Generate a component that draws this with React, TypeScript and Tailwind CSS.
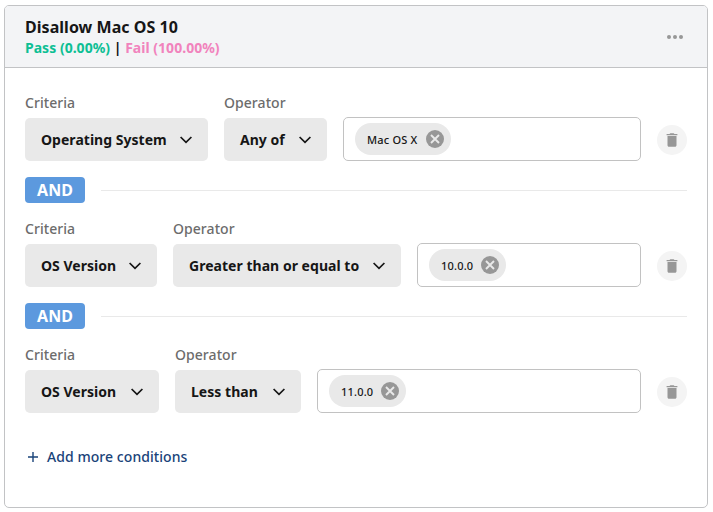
import React from "react";

type Condition = {
  criteria: string;
  operator: string;
  value: string;
  criteriaWidth: string;
  operatorWidth: string;
  chipWidth: string;
};

const conditions: Condition[] = [
  { criteria: "Operating System", operator: "Any of", value: "Mac OS X", criteriaWidth: "w-[183px]", operatorWidth: "w-[103px]", chipWidth: "w-24" },
  { criteria: "OS Version", operator: "Greater than or equal to", value: "10.0.0", criteriaWidth: "w-[132px]", operatorWidth: "w-[228px]", chipWidth: "w-[77px]" },
  { criteria: "OS Version", operator: "Less than", value: "11.0.0", criteriaWidth: "w-[134px]", operatorWidth: "w-[126px]", chipWidth: "w-[77px]" },
];

function Select({ label, value, width }: { label: string; value: string; width: string }) {
  return (
    <div className={`flex shrink-0 flex-col ${width}`}>
      <span className="mb-[5px] h-5 text-sm leading-5 font-medium tracking-[0.06px] text-[#6c6c6c]">{label}</span>
      <button className="flex h-[43px] items-center justify-between rounded-[5px] bg-[#e9e9e9] pr-4 pl-4 text-sm font-bold tracking-[0.03px] whitespace-nowrap text-[#161616]">
        <span>{value}</span>
        <svg width="12" height="8" viewBox="0 0 12 8" fill="none" stroke="#161616" strokeWidth="1.7">
          <path d="M0.6 1 6 6.4 11.4 1" />
        </svg>
      </button>
    </div>
  );
}

function Chip({ text, width }: { text: string; width: string }) {
  return (
    <span className={`flex h-8 items-center justify-between rounded-full bg-[#e9e9e9] pr-[7px] pl-3 text-[11px] font-medium tracking-[0.2px] whitespace-nowrap text-[#161616] ${width}`}>
      <span className="pt-[2px]">{text}</span>
      <svg width="18" height="18" viewBox="0 0 18 18">
        <circle cx="9" cy="9" r="9" fill="#979797" />
        <path d="m5 5 8 8M13 5l-8 8" stroke="#e9e9e9" strokeWidth="1.9" />
      </svg>
    </span>
  );
}

function DeleteButton() {
  return (
    <button className="mb-[6px] flex size-[30px] shrink-0 items-center justify-center rounded-full bg-[#f4f4f4]">
      <svg width="12" height="14" viewBox="0 0 12 14" fill="#979797">
        <path d="M.6 1h2.9l.8-.8h3.4l.8.8h2.9v1.3H.6zM1.5 3h9v9.3c0 .9-.6 1.5-1.5 1.5H3c-.9 0-1.5-.6-1.5-1.5z" />
      </svg>
    </button>
  );
}

export default function App() {
  return (
    <div className="h-[512px] w-[713px] bg-white pt-[5px] pl-1 font-['Noto_Sans',sans-serif]">
      <section className="h-[503px] w-[704px] overflow-hidden rounded-[5px] border border-[#c2c3c5] bg-white">
        <header className="flex h-[62px] items-center justify-between border-b border-[#c2c3c5] bg-[#f3f4f6] pr-6 pl-5">
          <div>
            <h1 className="text-base leading-[22px] font-bold tracking-[0.04px] text-[#161616]">Disallow Mac OS 10</h1>
            <p className="text-sm leading-5 font-bold tracking-[0.02px] text-[#161616]">
              <span className="text-[#0dbf94]">Pass (0.00%)</span> | <span className="text-[#f183bd]">Fail (100.00%)</span>
            </p>
          </div>
          <svg width="16" height="4" viewBox="0 0 16 4" fill="#979797">
            <circle cx="2" cy="2" r="2" />
            <circle cx="8" cy="2" r="2" />
            <circle cx="14" cy="2" r="2" />
          </svg>
        </header>

        <div className="flex flex-col gap-4 pt-[25px] pr-5 pl-5">
          {conditions.map((c, i) => (
            <React.Fragment key={i}>
              {i > 0 && (
                <div className="flex h-[26px] items-center gap-4">
                  <span className="flex h-[26px] w-[60px] items-center justify-center rounded bg-[#5c99de] text-base font-bold text-white">AND</span>
                  <div className="h-px flex-1 bg-[#e9e9e9]" />
                </div>
              )}
              <div className="flex h-[68px] items-end gap-4">
                <Select label="Criteria" value={c.criteria} width={c.criteriaWidth} />
                <Select label="Operator" value={c.operator} width={c.operatorWidth} />
                <div className="flex h-11 flex-1 items-center rounded-[5px] border border-[#c2c2c2] pl-[11px]">
                  <Chip text={c.value} width={c.chipWidth} />
                </div>
                <DeleteButton />
              </div>
            </React.Fragment>
          ))}
        </div>

        <button className="mt-[34px] ml-[23px] flex h-5 items-center gap-[9px] text-sm font-medium tracking-[0.06px] text-[#194379]">
          <svg width="10" height="10" viewBox="0 0 10 10" stroke="#194379" strokeWidth="1.4">
            <path d="M5 0v10M0 5h10" />
          </svg>
          <span>Add more conditions</span>
        </button>
      </section>
    </div>
  );
}
